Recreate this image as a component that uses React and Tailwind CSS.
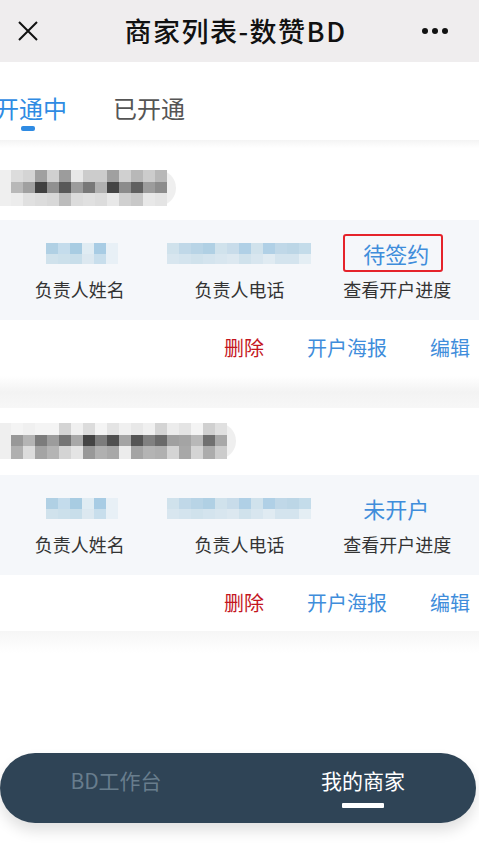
import React from 'react';

const font = { fontFamily: '"Noto Sans CJK SC", "Noto Sans", sans-serif' };

// mosaic colours, row by row, read off the blurred fields
const name1 = [
  ['dcdcdc', 'd4d4d4', 'a0a0a0', 'd0d0d0', '9c9c9c', 'e8e8e8', 'cccccc', 'cccccc', 'a0a0a0', 'd0d0d0', 'b8b8b8', 'cccccc', 'b8b8b8'],
  ['b8b8b8', 'a0a0a0', '404040', '909090', '585858', '9c9c9c', '787878', 'b0b0b0', '444444', '8c8c8c', '606060', '9c9c9c', '8c8c8c'],
  ['ececec', 'e0e0e0', 'dcdcdc', 'd8d8d8', 'bcbcbc', 'dcdcdc', 'e0e0e0', 'dcdcdc', 'e8e8e8', 'd0d0d0', 'c8c8c8', 'e8e8e8', 'e4e4e4'],
];
const name2 = [
  ['f4f4f4', 'f0f0f0', 'f4f4f4', 'f4f4f4', 'd4d4d4', 'f0f0f0', 'dcdcdc', 'f4f4f4', 'e4e4e4', 'f0f0f0', 'e8e8e8', 'f0f0f0', 'd4d4d4', 'ececec', 'e4e4e4', 'f4f4f4', 'd0d0d0', 'e0e0e0'],
  ['989898', 'b4b4b4', '7c7c7c', '9c9c9c', '747474', 'a8a8a8', '444444', '7c7c7c', '505050', 'a4a4a4', '545454', '808080', '6a6a6a', 'a0a0a0', 'a4a4a4', 'b8b8b8', '707070', 'a8a8a8'],
  ['b0b0b0', 'dcdcdc', 'a4a4a4', 'b4b4b4', 'd4d4d4', 'e4e4e4', '989898', 'b0b0b0', 'a8a8a8', 'ececec', 'a4a4a4', 'b4b4b4', 'b0b0b0', 'd4d4d4', 'a8a8a8', 'd4d4d4', 'acacac', 'cccccc'],
];
const person = [
  ['b0d0e4', 'c4dcec', 'a8cce2', 'e0ecf3', 'a8cce4', 'e8f0f6'],
  ['d0e2ec', 'cce0eb', 'c8deea', 'dce8f0', 'c8deec', 'e8f0f6'],
];
const phone = [
  ['d0e2ec', 'c0d8e8', 'b8d4e6', 'b0d0e4', 'd0e2ec', 'c8dcea', 'b0d0e6', 'd0e2ec', 'b0d0e6', 'c0d8e8', 'bcd6e6', 'c4dcea'],
  ['d8e6ef', 'd4e4ee', 'd0e2ec', 'd4e4ee', 'd8e6ef', 'dce8f0', 'd0e2ec', 'd8e6ef', 'e0ebf2', 'd4e4ee', 'd4e4ee', 'e4eef4'],
];

const Mosaic = ({ rows, heights }) => (
  <div className="flex flex-col">
    {rows.map((row, i) => (
      <div key={i} className="flex">
        {row.map((c, j) => (
          <div key={j} className="w-[12px]" style={{ background: `#${c}`, height: heights[i] }} />
        ))}
      </div>
    ))}
  </div>
);

const Card = ({ name, status, boxed, top, gap }) => (
  <div className="bg-white" style={{ paddingTop: top }}>
    <div className="flex">
      <div className="rounded-r-full bg-[#efefef] pl-[11px] pr-[9px]">
        <Mosaic rows={name} heights={[12, 11, 13]} />
      </div>
    </div>
    <div className="h-[100px] bg-[#f5f7fa] grid grid-cols-3" style={{ marginTop: gap }}>
      <div className="flex flex-col items-center">
        <div className="h-[40px] mt-[13px] flex items-center ml-[4px]">
          <Mosaic rows={person} heights={[11, 10]} />
        </div>
        <div className="mt-[3px] text-[18px] leading-[26px] text-[#333]">负责人姓名</div>
      </div>
      <div className="flex flex-col items-center">
        <div className="h-[40px] mt-[13px] flex items-center">
          <Mosaic rows={phone} heights={[11, 10]} />
        </div>
        <div className="mt-[3px] text-[18px] leading-[26px] text-[#333]">负责人电话</div>
      </div>
      <div className="flex flex-col items-center">
        <div className="h-[40px] mt-[13px] flex items-center">
          {boxed ? (
            <div className="mr-[12px] w-[100px] h-[38px] border-2 border-[#e5232b] rounded-[3px] flex items-center justify-center text-[22px] text-[#3f8ddb] pl-[6px]">
              {status}
            </div>
          ) : (
            <div className="mr-[6px] text-[22px] text-[#3f8ddb]">{status}</div>
          )}
        </div>
        <div className="mt-[3px] mr-[4px] text-[18px] leading-[26px] text-[#333]">查看开户进度</div>
      </div>
    </div>
    <div className="h-[56px] flex items-center justify-end gap-[43px] pr-[9px] text-[20px]">
      <span className="text-[#c4161e]">删除</span>
      <span className="text-[#3f8ddb]">开户海报</span>
      <span className="text-[#3f8ddb]">编辑</span>
    </div>
  </div>
);

export default function App() {
  return (
    <div className="relative h-[845px] w-[479px] overflow-hidden bg-white" style={font}>
      <div className="h-[62px] bg-[#efedee] flex items-center justify-between px-[16px]">
        <svg width="22" height="22" viewBox="0 0 22 22" className="ml-[1px]">
          <path d="M2 2 L20 20 M20 2 L2 20" stroke="#111" strokeWidth="2" fill="none" />
        </svg>
        <div className="text-[27px] font-medium text-[#111] tracking-[1.5px] ml-[10px]">商家列表-数赞BD</div>
        <div className="flex gap-[4px] mr-[15px]">
          <span className="w-[6px] h-[6px] rounded-full bg-[#111]" />
          <span className="w-[6px] h-[6px] rounded-full bg-[#111]" />
          <span className="w-[6px] h-[6px] rounded-full bg-[#111]" />
        </div>
      </div>

      <div className="h-[78px] flex items-start pt-[30px] text-[24px] leading-[32px]">
        <div className="ml-[-5px] flex flex-col items-center">
          <span className="text-[#2f8be3]">开通中</span>
          <span className="mt-[2px] ml-[-6px] w-[14px] h-[5px] rounded-[2px] bg-[#2f8be3]" />
        </div>
        <span className="ml-[46px] text-[#555]">已开通</span>
      </div>
      <div className="h-[8px] bg-gradient-to-b from-[#f4f4f4] to-white" />

      <Card name={name1} status="待签约" boxed top={22} gap={14} />
      <div className="h-[32px] bg-gradient-to-b from-white via-[#f3f3f3] to-[#f7f7f7]" />
      <Card name={name2} status="未开户" top={15} gap={16} />
      <div className="h-[22px] bg-gradient-to-b from-[#f6f6f6] to-white" />

      <div className="absolute left-0 right-[3px] bottom-[22px] h-[70px] rounded-full bg-[#2f4456] shadow-[0_8px_14px_rgba(0,0,0,0.12)] flex justify-between pl-[36px] pr-[33px]">
        <div className="w-[160px] flex flex-col items-center pt-[13px]">
          <span className="text-[21px] leading-[28px] text-[#687d8d]">BD工作台</span>
        </div>
        <div className="w-[160px] flex flex-col items-center pt-[13px]">
          <span className="text-[21px] leading-[28px] text-white">我的商家</span>
          <span className="mt-[9px] w-[42px] h-[5px] bg-white rounded-[1px]" />
        </div>
      </div>
    </div>
  );
}
